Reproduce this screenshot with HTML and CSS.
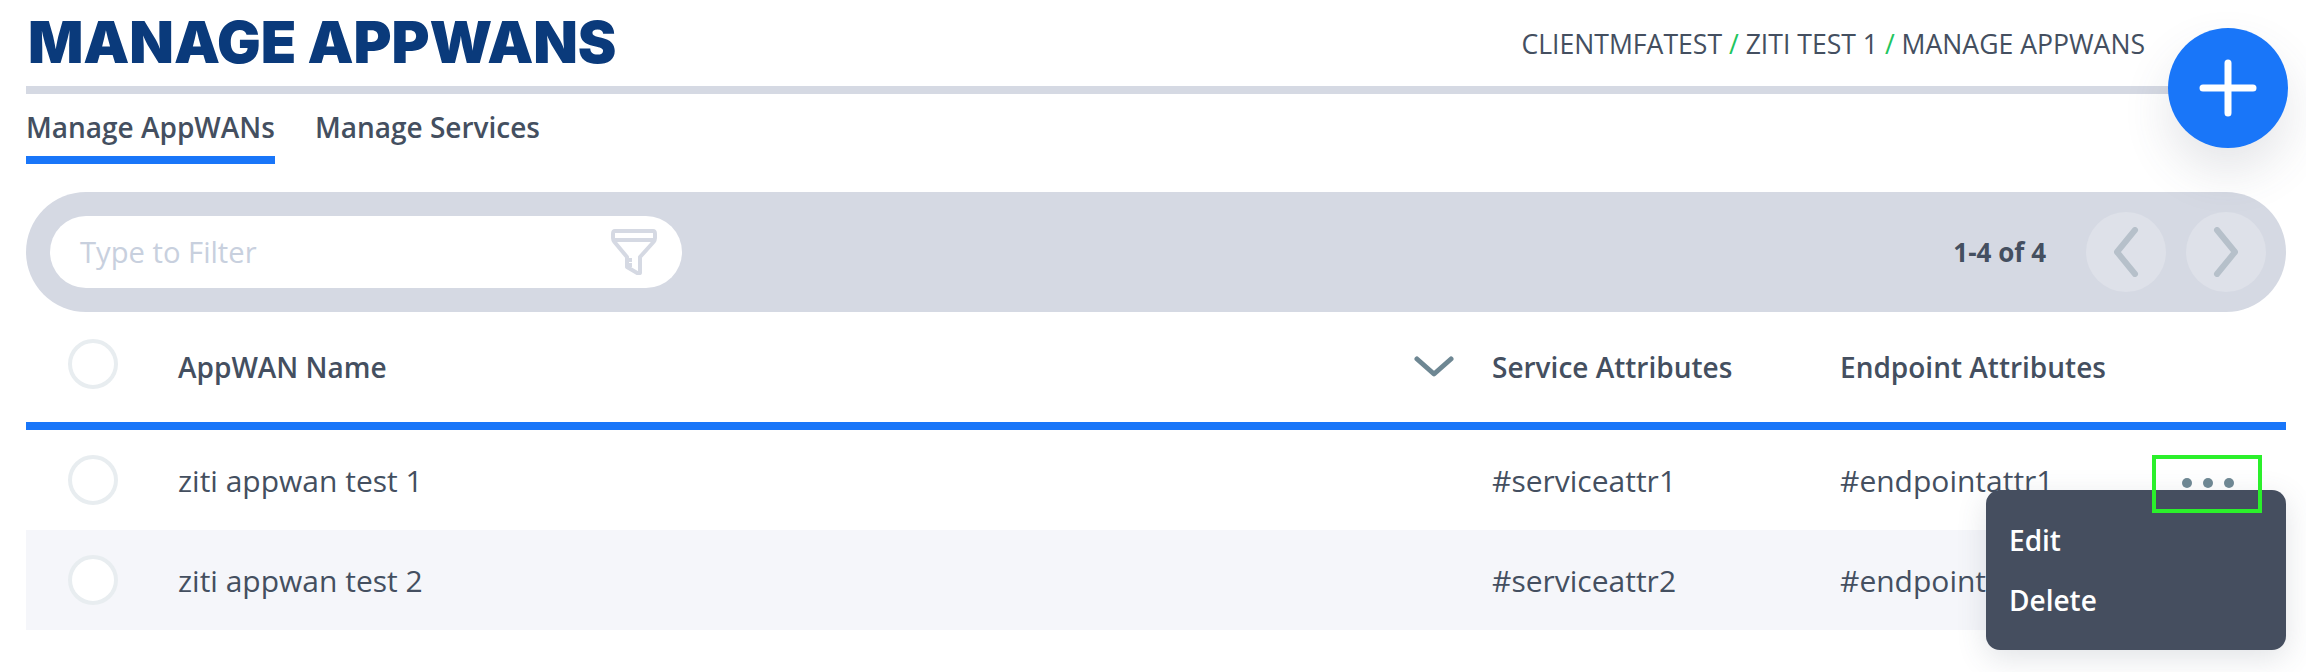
FILE: index.html
```html
<!DOCTYPE html>
<html lang="en">
  <head>
    <meta charset="UTF-8" />
    <title>Manage AppWANs</title>
    <link rel="stylesheet" href="styles.css">
  </head>
  <body>
    <header class="page-header">
      <h1 class="title">MANAGE APPWANS</h1>
      <div class="breadcrumb">
        CLIENTMFATEST <span class="slash">/</span> ZITI TEST 1 <span class="slash">/</span> MANAGE APPWANS
      </div>
    </header>
    <button class="fab" aria-label="Add">
      <svg width="60" height="60" viewBox="0 0 60 60">
        <path d="M30 5V55M5 30H55" stroke="#fff" stroke-width="7" stroke-linecap="round" fill="none" />
      </svg>
    </button>

    <nav class="tabs">
      <a class="tab active">Manage AppWANs</a>
      <a class="tab">Manage Services</a>
    </nav>

    <div class="filter-bar">
      <div class="filter-field">
        <span class="placeholder">Type to Filter</span>
        <svg class="filter-icon" width="46" height="46" viewBox="0 0 46 46" fill="none" stroke="#d5d9e3" stroke-width="4" stroke-linejoin="round">
          <path d="M4 2H42Q44 2 44 5V9Q44 11 42.500 13L29 28V44L27 44.500L16 38V28L3.500 13Q2 11 2 9V5Q2 2 4 2Z" />
          <path d="M2 11H44" />
          <path d="M16 31H21M16 36H21" />
        </svg>
      </div>
      <div class="pager">
        <span class="count">1-4 of 4</span>
        <button class="page-btn" aria-label="Previous">
          <svg width="26" height="50" viewBox="0 0 26 50"><path d="M22 3L4 25L22 47" /></svg>
        </button>
        <button class="page-btn" aria-label="Next">
          <svg width="26" height="50" viewBox="0 0 26 50"><path d="M4 3L22 25L4 47" /></svg>
        </button>
      </div>
    </div>

    <div class="table">
      <div class="row head">
        <div class="cell-check"><span class="check"></span></div>
        <div class="cell-name">
          <span>AppWAN Name</span>
          <svg class="sort" width="40" height="22" viewBox="0 0 40 22"><path d="M3 3L20 18L37 3" /></svg>
        </div>
        <div>Service Attributes</div>
        <div>Endpoint Attributes</div>
      </div>
      <div class="row">
        <div class="cell-check"><span class="check"></span></div>
        <div>ziti appwan test 1</div>
        <div>#serviceattr1</div>
        <div>#endpointattr1</div>
        <div class="dots-box"><i></i><i></i><i></i></div>
        <div class="menu">
          <div class="menu-item">Edit</div>
          <div class="menu-item">Delete</div>
        </div>
      </div>
      <div class="row alt">
        <div class="cell-check"><span class="check"></span></div>
        <div>ziti appwan test 2</div>
        <div>#serviceattr2</div>
        <div>#endpointattr2</div>
      </div>
    </div>
  </body>
</html>
```

FILE: styles.css
```css
html {
  height: 100%;
}
body {
  margin: 0;
  padding: 0 20px 0 26px;
  height: 672px;
  box-sizing: border-box;
  overflow: hidden;
  position: relative;
  background: #fff;
  color: #444f60;
  font-family: "Open Sans", sans-serif;
  font-size: 30px;
}

.page-header {
  height: 86px;
  border-bottom: 8px solid #d5d9e3;
  display: flex;
  justify-content: space-between;
  align-items: flex-start;
}
.title {
  margin: 8px 0 0 2px;
  font-family: Inter, sans-serif;
  font-size: 58px;
  font-weight: 900;
  line-height: 68px;
  letter-spacing: -0.100px;
  color: #0a3a7b;
  white-space: nowrap;
}
.breadcrumb {
  margin: 26px 141px 0 0;
  font-size: 26.600px;
  font-weight: 500;
  line-height: 36px;
}
.slash {
  color: #22c55e;
}

.fab {
  position: absolute;
  top: 28px;
  right: 18px;
  width: 120px;
  height: 120px;
  padding: 0;
  border: 0;
  border-radius: 50%;
  background: #1976f9;
  box-shadow: 0 24px 48px rgba(70, 80, 100, 0.14);
  display: flex;
  align-items: center;
  justify-content: center;
}

.tabs {
  display: flex;
  gap: 40px;
  margin-top: 13px;
  height: 69px;
  align-items: flex-start;
  font-size: 28px;
  font-weight: 600;
}
.tab {
  height: 49px;
  line-height: 40px;
}
.tab.active {
  border-bottom: 8px solid #1976f9;
}

.filter-bar {
  margin-top: 16px;
  height: 120px;
  border-radius: 60px;
  background: #d5d9e3;
  display: flex;
  justify-content: space-between;
  align-items: center;
  padding: 0 20px 0 24px;
}
.filter-field {
  width: 632px;
  height: 72px;
  box-sizing: border-box;
  padding: 0 25px 0 30px;
  border-radius: 36px;
  background: #fff;
  display: flex;
  justify-content: space-between;
  align-items: center;
}
.placeholder {
  color: #c8d0de;
  font-size: 29.200px;
}
.pager {
  display: flex;
  align-items: center;
  gap: 20px;
}
.count {
  margin-right: 20px;
  font-size: 26px;
  font-weight: 700;
}
.page-btn {
  width: 80px;
  height: 80px;
  padding: 0;
  border: 0;
  border-radius: 50%;
  background: #dee1e9;
  display: flex;
  align-items: center;
  justify-content: center;
}
.page-btn path {
  fill: none;
  stroke: #b6c0ca;
  stroke-width: 6;
  stroke-linecap: round;
  stroke-linejoin: round;
}

.row {
  position: relative;
  height: 100px;
  display: grid;
  grid-template-columns: 152px 1314px 348px 1fr;
  align-items: center;
}
.row.head {
  height: 110px;
  border-bottom: 8px solid #1976f9;
  font-size: 28px;
  font-weight: 600;
}
.row.alt {
  background: #f5f6fa;
}
.cell-check {
  padding-left: 42px;
  display: flex;
}
.head .cell-check {
  margin-top: -6px;
}
.check {
  width: 50px;
  height: 50px;
  box-sizing: border-box;
  border: 4px solid #e8edf0;
  border-radius: 50%;
  background: #fff;
}
.cell-name {
  display: flex;
  justify-content: space-between;
  align-items: center;
  padding-right: 38px;
}
.sort path {
  fill: none;
  stroke: #6e8793;
  stroke-width: 5;
  stroke-linecap: round;
  stroke-linejoin: round;
}

.dots-box {
  position: absolute;
  z-index: 3;
  top: 25px;
  right: 24px;
  width: 110px;
  height: 58px;
  box-sizing: border-box;
  border: 4px solid #2bf02b;
  display: flex;
  justify-content: center;
  align-items: center;
  gap: 11px;
  padding: 0 0 2px 2px;
}
.dots-box i {
  width: 10px;
  height: 10px;
  border-radius: 50%;
  background: #6e8793;
}
.menu {
  position: absolute;
  z-index: 2;
  top: 60px;
  right: 0;
  width: 300px;
  height: 160px;
  box-sizing: border-box;
  padding: 20px 23px;
  border-radius: 14px;
  background: #454e5f;
  box-shadow: 0 8px 30px rgba(70, 80, 100, 0.16);
  color: #fff;
  font-size: 28px;
  font-weight: 600;
}
.menu-item {
  height: 60px;
  line-height: 60px;
}
```
